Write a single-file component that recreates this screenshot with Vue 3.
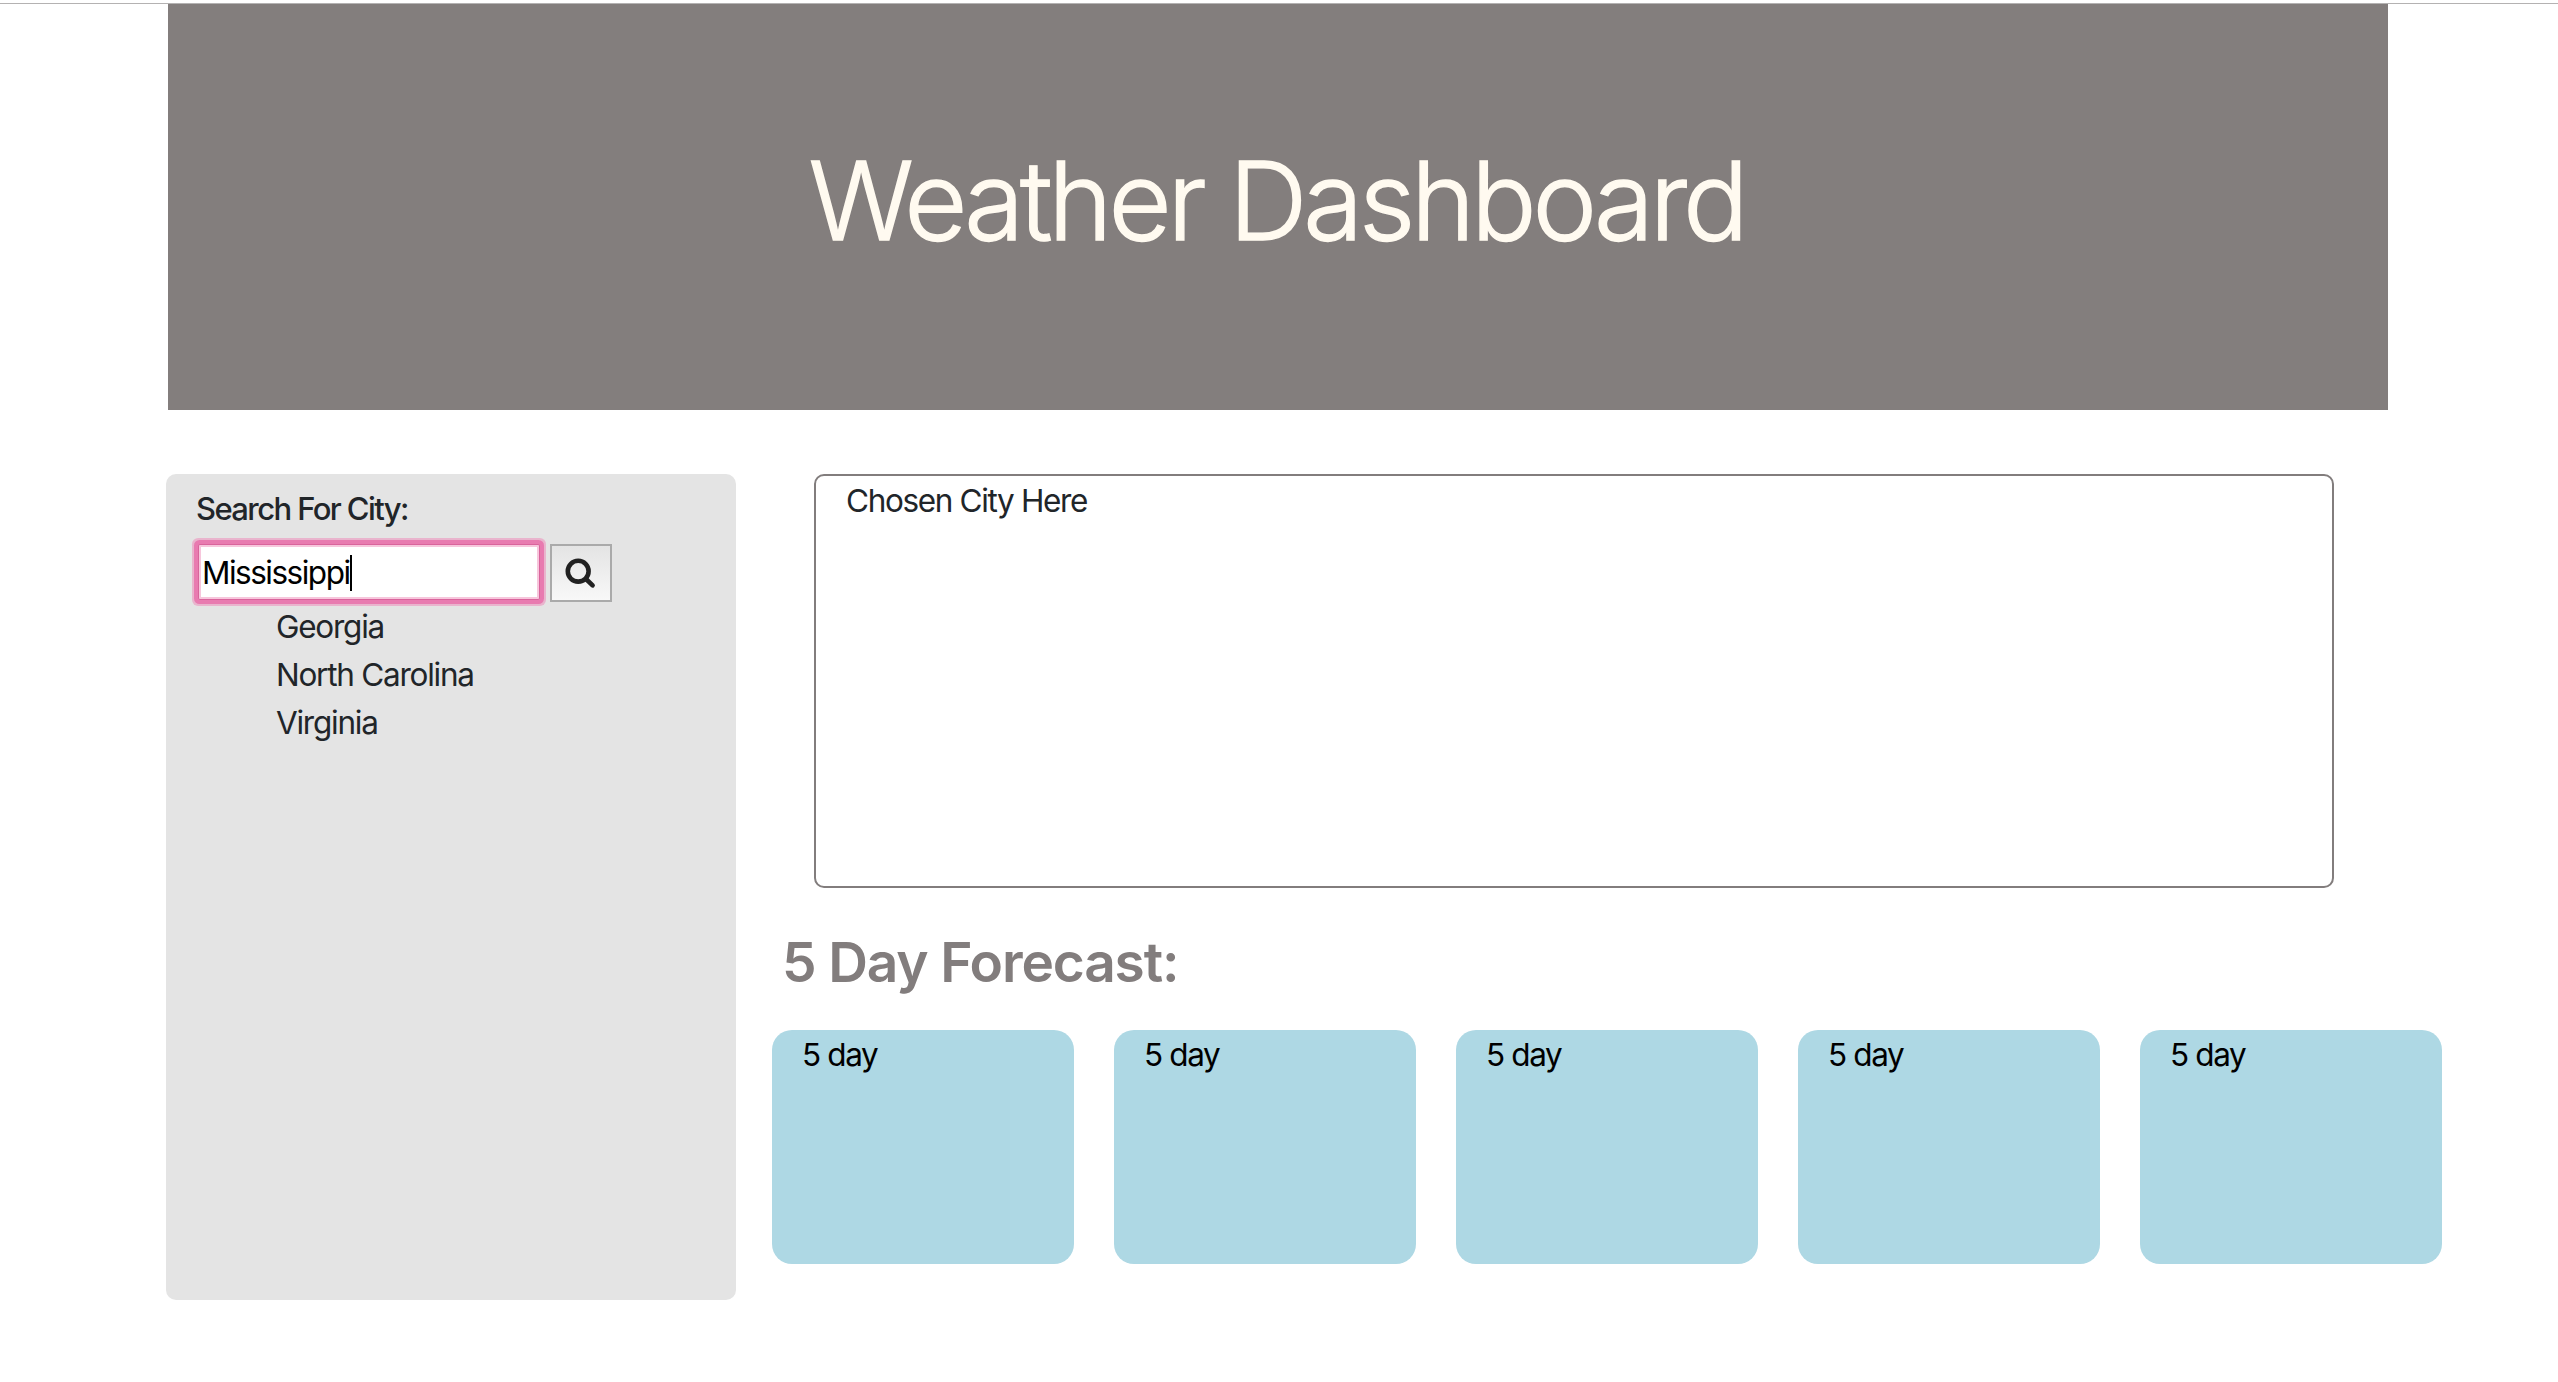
<script setup>
const cities = ['Georgia', 'North Carolina', 'Virginia']
const days = [1, 2, 3, 4, 5]
</script>

<template>
  <div class="page">
    <header class="hero"><h1>Weather Dashboard</h1></header>
    <main class="content">
      <aside class="sidebar">
        <h2 class="label">Search For City:</h2>
        <form class="search" @submit.prevent>
          <div class="field"><span class="typed">Mississippi</span><i class="caret"></i></div>
          <button class="go" type="submit" aria-label="Search">
            <svg width="32" height="32" viewBox="0 0 32 32" fill="none" stroke="#212121">
              <circle cx="13.2" cy="14.2" r="10.4" stroke-width="4.6" />
              <path d="M21 22 L27.6 28.4" stroke-width="4.6" stroke-linecap="round" />
            </svg>
          </button>
        </form>
        <ul class="cities">
          <li v-for="c in cities" :key="c">{{ c }}</li>
        </ul>
      </aside>
      <section class="main">
        <div class="chosen">Chosen City Here</div>
        <h3 class="title">5 Day Forecast:</h3>
        <div class="cards">
          <div v-for="d in days" :key="d" class="card">5 day</div>
        </div>
      </section>
    </main>
  </div>
</template>

<style>
body {
  margin: 0;
  background: #fff;
}
</style>

<style scoped>
* {
  box-sizing: border-box;
}
.page {
  width: 2558px;
  height: 1382px;
  overflow: hidden;
  padding-top: 3px;
  font: 400 31.5px/48px Inter, "Liberation Sans", sans-serif;
  letter-spacing: -1.35px;
  color: #212529;
  background: linear-gradient(#fff 3px, #b4b2b2 3px, #b4b2b2 4px, #fff 4px);
}
.hero {
  width: 2220px;
  height: 407px;
  margin-left: 168px;
  border-top: 1px solid #b4b2b2;
  background: #837e7d;
  display: flex;
  justify-content: center;
  padding-top: 129px;
}
h1 {
  margin: 0;
  font-size: 109px;
  font-weight: 300;
  line-height: 134px;
  letter-spacing: -4.15px;
  text-indent: -3px;
  color: floralwhite;
  -webkit-text-stroke: 1.4px floralwhite;
  white-space: nowrap;
}
.content {
  display: flex;
  margin: 64px 0 0 166px;
}
.sidebar {
  width: 570px;
  height: 826px;
  flex: none;
  padding: 11px 30px;
  border-radius: 10px;
  background: #e4e4e4;
}
.label {
  margin: 0;
  font-size: 31px;
  font-weight: 500;
  line-height: 48px;
  letter-spacing: -1.6px;
}
.search {
  display: flex;
  align-items: center;
  height: 58px;
  margin-top: 11px;
}
.field {
  display: flex;
  align-items: center;
  width: 342px;
  height: 56px;
  margin: -2px 0 0 2px;
  padding: 2px 0 0 3px;
  border: 1px solid #d9649c;
  border-radius: 2px;
  background: #fff;
  color: #000;
  letter-spacing: -1.5px;
  box-shadow: inset 0 0 0 2px #f7c6dc, 0 0 0 4px #e87bb0, 0 0 0 6px #e9b4cd;
}
.caret {
  width: 2px;
  height: 36px;
  background: #000;
}
.go {
  display: flex;
  align-items: center;
  justify-content: center;
  width: 62px;
  height: 58px;
  margin-left: 10px;
  padding: 0;
  border: 2px solid #aaa;
  background: linear-gradient(#e4e4e4, #f8f8f8);
}
.cities {
  margin: 0;
  padding: 1px 0 0 80px;
  letter-spacing: -1.25px;
  list-style: none;
}
.main {
  margin-left: 36px;
}
.chosen {
  width: 1520px;
  height: 414px;
  margin-left: 42px;
  padding: 1px 30px;
  border: 2px solid #827d7d;
  border-radius: 10px;
}
.title {
  margin: 40px 0 0 10px;
  font-size: 55px;
  font-weight: 600;
  line-height: 68px;
  letter-spacing: -1.15px;
  color: #827d7d;
}
.cards {
  display: flex;
  gap: 40px;
  margin-top: 34px;
}
.card {
  width: 302px;
  height: 234px;
  padding: 1px 30px;
  border-radius: 20px;
  background: #aed8e4;
  color: #000;
}
</style>
